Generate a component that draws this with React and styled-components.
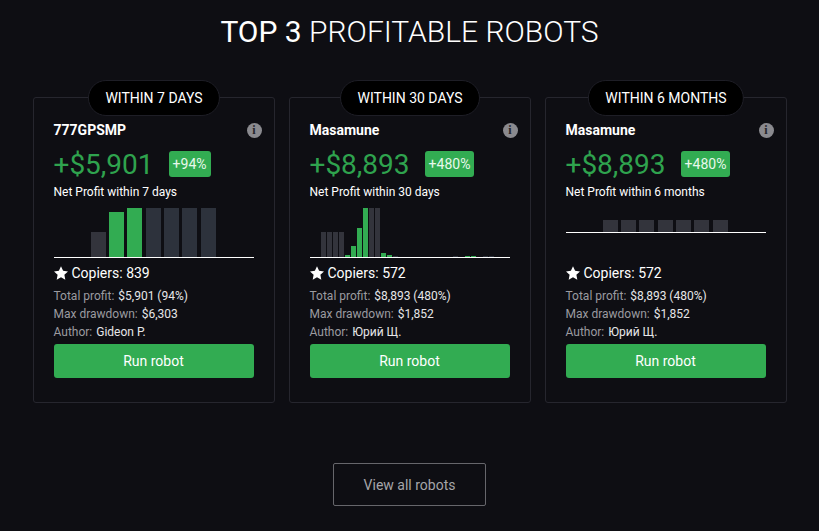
import React from "react";
import styled, { createGlobalStyle } from "styled-components";

const GlobalStyle = createGlobalStyle`
  html, body {
    margin: 0;
    background: #0e0e13;
    font-family: Roboto, "Liberation Sans", sans-serif;
    color: #fff;
  }
`;

const robots = [
  {
    period: "WITHIN 7 DAYS",
    name: "777GPSMP",
    profit: "+$5,901",
    percent: "+94%",
    net: "Net Profit within 7 days",
    copiers: 839,
    total: "$5,901 (94%)",
    drawdown: "$6,303",
    author: "Gideon P.",
    chart: { height: 49, barWidth: 15, gap: 3.4, offset: 37 },
    bars: [
      [25, 3], [45, 1], [49, 1], [49, 2], [49, 2], [49, 2], [49, 2],
    ],
  },
  {
    period: "WITHIN 30 DAYS",
    name: "Masamune",
    profit: "+$8,893",
    percent: "+480%",
    net: "Net Profit within 30 days",
    copiers: 572,
    total: "$8,893 (480%)",
    drawdown: "$1,852",
    author: "Юрий Щ.",
    chart: { height: 49, barWidth: 5, gap: 1, offset: 11 },
    bars: [
      [25, 3], [25, 3], [25, 3], [25, 3], [2, 1], [11, 1], [29, 1], [49, 1],
      [49, 3], [49, 3], [4, 1], [2, 1], [1, 2], [0, 0], [0, 0], [0, 0], [0, 0],
      [0, 0], [0, 0], [0, 0], [0, 0], [0, 0], [1, 2], [0, 0], [1, 1], [1, 1],
      [0, 0], [1, 2], [1, 2], [0, 0],
    ],
  },
  {
    period: "WITHIN 6 MONTHS",
    name: "Masamune",
    profit: "+$8,893",
    percent: "+480%",
    net: "Net Profit within 6 months",
    copiers: 572,
    total: "$8,893 (480%)",
    drawdown: "$1,852",
    author: "Юрий Щ.",
    chart: { height: 24, barWidth: 15, gap: 3.4, offset: 37 },
    bars: [
      [12, 3], [12, 3], [12, 3], [12, 3], [12, 3], [12, 3], [12, 3],
    ],
  },
];

const barColors = ["transparent", "#32ac52", "#2d323c", "#33343c"];

const Page = styled.main`
  width: 819px;
  height: 531px;
  overflow: hidden;
  display: flex;
  flex-direction: column;
  align-items: center;
  padding-top: 14px;
  box-sizing: border-box;
`;

const Title = styled.h1`
  margin: 0;
  font-size: 30px;
  line-height: 36px;
  font-weight: 300;
  b {
    font-weight: 400;
  }
`;

const Cards = styled.section`
  display: flex;
  gap: 14px;
  margin-top: 47px;
`;

const Card = styled.article`
  position: relative;
  width: 242px;
  height: 306px;
  box-sizing: border-box;
  padding: 23px 20px 0;
  border: 1px solid #26262e;
  border-radius: 3px;
`;

const Pill = styled.div`
  position: absolute;
  top: -18px;
  left: 50%;
  transform: translateX(-50%);
  height: 36px;
  padding: 0 16px 0 17px;
  box-sizing: border-box;
  display: flex;
  align-items: center;
  white-space: nowrap;
  background: #000;
  border: 1px solid #1e1e26;
  border-radius: 18px;
  font-size: 14px;
`;

const NameRow = styled.div`
  display: flex;
  justify-content: space-between;
  align-items: center;
  height: 18px;
`;

const Name = styled.span`
  font-size: 14px;
  font-weight: 700;
`;

const Info = styled.span`
  width: 15px;
  height: 15px;
  margin-right: -8px;
  border-radius: 50%;
  background: #8a8a8f;
  color: #26262c;
  font-family: "Liberation Serif", serif;
  font-size: 12px;
  font-weight: 700;
  line-height: 15px;
  text-align: center;
`;

const ProfitRow = styled.div`
  display: flex;
  align-items: center;
  gap: 15px;
  margin-top: 12px;
  height: 26px;
`;

const Profit = styled.span`
  color: #2fa34e;
  font-size: 28px;
  font-weight: 400;
`;

const Badge = styled.span`
  height: 26px;
  padding: 0 4px;
  display: flex;
  align-items: center;
  background: #32ac52;
  border-radius: 3px;
  font-size: 14px;
  color: #e8f8ec;
`;

const NetLabel = styled.div`
  margin-top: 7px;
  font-size: 12px;
  line-height: 16px;
`;

const ChartArea = styled.div`
  height: 50px;
  margin-top: 8px;
`;

const Chart = styled.div`
  height: ${(p) => p.$height}px;
  margin-top: ${(p) => (p.$height < 49 ? 4 : 0)}px;
  display: flex;
  align-items: flex-end;
  gap: ${(p) => p.$gap}px;
  padding-left: ${(p) => p.$offset}px;
  border-bottom: 1px solid #fff;
`;

const Bar = styled.div`
  width: ${(p) => p.$width}px;
  flex: none;
  height: ${(p) => p.$size}px;
  background: ${(p) => barColors[p.$tone]};
`;

const Copiers = styled.div`
  display: flex;
  align-items: center;
  gap: 4px;
  margin-top: 6px;
  font-size: 14px;
  line-height: 18px;
`;

const StarIcon = () => (
  <svg width="14" height="14" viewBox="0 0 24 24" fill="#fff">
    <polygon points="12,0.5 15.6,8.3 24,9.3 17.8,15.1 19.4,23.5 12,19.3 4.6,23.5 6.2,15.1 0,9.3 8.4,8.3" />
  </svg>
);

const Stats = styled.dl`
  margin: 5px 0 0;
  font-size: 12px;
  line-height: 18px;
`;

const Stat = styled.div`
  display: flex;
  gap: 4px;
  dt {
    color: #9b9ba0;
  }
  dd {
    margin: 0;
    color: #e6e6e8;
  }
`;

const RunButton = styled.button`
  display: block;
  width: 100%;
  height: 34px;
  margin-top: 3px;
  border: 0;
  border-radius: 3px;
  background: #32ac52;
  color: #fff;
  font-family: inherit;
  font-size: 14px;
`;

const ViewAll = styled.button`
  width: 153px;
  height: 43px;
  margin-top: 60px;
  background: transparent;
  border: 1px solid #66666b;
  border-radius: 2px;
  color: #a5a5a9;
  font-family: inherit;
  font-size: 14px;
`;

const App = () => (
  <Page>
    <GlobalStyle />
    <Title>
      <b>TOP 3</b> PROFITABLE ROBOTS
    </Title>
    <Cards>
      {robots.map((robot) => (
        <Card key={robot.period}>
          <Pill>{robot.period}</Pill>
          <NameRow>
            <Name>{robot.name}</Name>
            <Info>i</Info>
          </NameRow>
          <ProfitRow>
            <Profit>{robot.profit}</Profit>
            <Badge>{robot.percent}</Badge>
          </ProfitRow>
          <NetLabel>{robot.net}</NetLabel>
          <ChartArea>
            <Chart
              $height={robot.chart.height}
              $gap={robot.chart.gap}
              $offset={robot.chart.offset}
            >
              {robot.bars.map(([size, tone], i) => (
                <Bar key={i} $width={robot.chart.barWidth} $size={size} $tone={tone} />
              ))}
            </Chart>
          </ChartArea>
          <Copiers>
            <StarIcon />
            Copiers: {robot.copiers}
          </Copiers>
          <Stats>
            <Stat>
              <dt>Total profit:</dt>
              <dd>{robot.total}</dd>
            </Stat>
            <Stat>
              <dt>Max drawdown:</dt>
              <dd>{robot.drawdown}</dd>
            </Stat>
            <Stat>
              <dt>Author:</dt>
              <dd>{robot.author}</dd>
            </Stat>
          </Stats>
          <RunButton>Run robot</RunButton>
        </Card>
      ))}
    </Cards>
    <ViewAll>View all robots</ViewAll>
  </Page>
);

export default App;
